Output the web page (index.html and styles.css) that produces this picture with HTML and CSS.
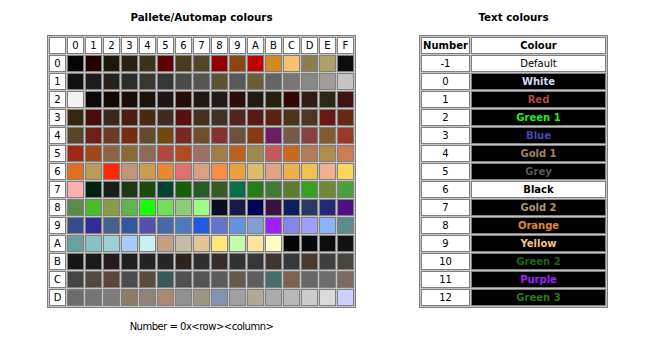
FILE: index.html
```html
<!DOCTYPE html>
<html>
<head>
<meta charset="utf-8">
<link rel="stylesheet" href="styles.css">
</head>
<body>
<div class="page">
  <div class="block">
    <div class="title">Pallete/Automap colours</div>
    <table class="grid">
      <tr><th></th><th>0</th><th>1</th><th>2</th><th>3</th><th>4</th><th>5</th><th>6</th><th>7</th><th>8</th><th>9</th><th>A</th><th>B</th><th>C</th><th>D</th><th>E</th><th>F</th></tr>
      <tr><th>0</th><td style="background:#050505"></td><td style="background:#230000"></td><td style="background:#1b1a0a"></td><td style="background:#2b2212"></td><td style="background:#3a3319"></td><td style="background:#600000"></td><td style="background:#483c1e"></td><td style="background:#524628"></td><td style="background:#920000"></td><td style="background:#8b4512"></td><td style="background:#c20000"></td><td style="background:#d48a20"></td><td style="background:#f2c26e"></td><td style="background:#8c7c52"></td><td style="background:#b0a068"></td><td style="background:#0c0c08"></td></tr>
      <tr><th>1</th><td style="background:#141210"></td><td style="background:#1d1d1d"></td><td style="background:#26231e"></td><td style="background:#2d2d2d"></td><td style="background:#3b3630"></td><td style="background:#363636"></td><td style="background:#4a4a4a"></td><td style="background:#5a5450"></td><td style="background:#5c5232"></td><td style="background:#585858"></td><td style="background:#6c5c38"></td><td style="background:#646464"></td><td style="background:#7a7472"></td><td style="background:#888888"></td><td style="background:#a09c98"></td><td style="background:#c4c4c4"></td></tr>
      <tr><th>2</th><td style="background:#f2f2f2"></td><td style="background:#0a0808"></td><td style="background:#120804"></td><td style="background:#1a0c08"></td><td style="background:#1c140c"></td><td style="background:#1e1614"></td><td style="background:#260c06"></td><td style="background:#201810"></td><td style="background:#211a18"></td><td style="background:#2c0e08"></td><td style="background:#201c14"></td><td style="background:#262010"></td><td style="background:#320806"></td><td style="background:#301c14"></td><td style="background:#2c2818"></td><td style="background:#401410"></td></tr>
      <tr><th>3</th><td style="background:#37260f"></td><td style="background:#460e0c"></td><td style="background:#3a281c"></td><td style="background:#4c1c0e"></td><td style="background:#482a12"></td><td style="background:#402a22"></td><td style="background:#581010"></td><td style="background:#483020"></td><td style="background:#403228"></td><td style="background:#522620"></td><td style="background:#5a1818"></td><td style="background:#5a2410"></td><td style="background:#4e3418"></td><td style="background:#503424"></td><td style="background:#6c1814"></td><td style="background:#642a12"></td></tr>
      <tr><th>4</th><td style="background:#5c4428"></td><td style="background:#6e2018"></td><td style="background:#6a3c24"></td><td style="background:#7a2c10"></td><td style="background:#664a2c"></td><td style="background:#704a0a"></td><td style="background:#7c2820"></td><td style="background:#6e4e2c"></td><td style="background:#8a302a"></td><td style="background:#6e5040"></td><td style="background:#883a10"></td><td style="background:#6e1c68"></td><td style="background:#785a48"></td><td style="background:#8a4040"></td><td style="background:#825c30"></td><td style="background:#9c3828"></td></tr>
      <tr><th>5</th><td style="background:#a02818"></td><td style="background:#a0481c"></td><td style="background:#8c6444"></td><td style="background:#886c38"></td><td style="background:#8c6a5a"></td><td style="background:#b04840"></td><td style="background:#b04c20"></td><td style="background:#9c7064"></td><td style="background:#a07c48"></td><td style="background:#be601c"></td><td style="background:#9c8850"></td><td style="background:#c45a58"></td><td style="background:#c86a1c"></td><td style="background:#b07c5c"></td><td style="background:#b08c4c"></td><td style="background:#c87c58"></td></tr>
      <tr><th>6</th><td style="background:#e07020"></td><td style="background:#b89c58"></td><td style="background:#ff2800"></td><td style="background:#c49478"></td><td style="background:#cc9a50"></td><td style="background:#e88830"></td><td style="background:#e07070"></td><td style="background:#d8a080"></td><td style="background:#f88c40"></td><td style="background:#eca03c"></td><td style="background:#dcbc68"></td><td style="background:#e0a484"></td><td style="background:#eeb04c"></td><td style="background:#f0c050"></td><td style="background:#f0b090"></td><td style="background:#fcd65c"></td></tr>
      <tr><th>7</th><td style="background:#fcb0b0"></td><td style="background:#022210"></td><td style="background:#162018"></td><td style="background:#1e3818"></td><td style="background:#1c4a0e"></td><td style="background:#024030"></td><td style="background:#186008"></td><td style="background:#285a24"></td><td style="background:#385a24"></td><td style="background:#087048"></td><td style="background:#287c14"></td><td style="background:#427a3a"></td><td style="background:#5c7c30"></td><td style="background:#38a020"></td><td style="background:#708838"></td><td style="background:#4aa03a"></td></tr>
      <tr><th>8</th><td style="background:#588c4c"></td><td style="background:#48bc28"></td><td style="background:#889c48"></td><td style="background:#60b44c"></td><td style="background:#18ff08"></td><td style="background:#70dc58"></td><td style="background:#8ccc78"></td><td style="background:#a0fc88"></td><td style="background:#0c0c24"></td><td style="background:#181a48"></td><td style="background:#020258"></td><td style="background:#381444"></td><td style="background:#0c2060"></td><td style="background:#2a3a60"></td><td style="background:#282878"></td><td style="background:#501080"></td></tr>
      <tr><th>9</th><td style="background:#384c8c"></td><td style="background:#322c98"></td><td style="background:#48608c"></td><td style="background:#3458a0"></td><td style="background:#5450b0"></td><td style="background:#4868a8"></td><td style="background:#5078c0"></td><td style="background:#205ae0"></td><td style="background:#6474cc"></td><td style="background:#6494dc"></td><td style="background:#80a0d4"></td><td style="background:#a020fc"></td><td style="background:#8484ec"></td><td style="background:#a0a0fc"></td><td style="background:#8cb4fc"></td><td style="background:#5c8c8c"></td></tr>
      <tr><th>A</th><td style="background:#68a0a0"></td><td style="background:#88c0c4"></td><td style="background:#9ccfd4"></td><td style="background:#accaf8"></td><td style="background:#ccf0f0"></td><td style="background:#c4a084"></td><td style="background:#c4bca4"></td><td style="background:#e4c494"></td><td style="background:#fce878"></td><td style="background:#c4fcac"></td><td style="background:#fce4a0"></td><td style="background:#fcfcc8"></td><td style="background:#040404"></td><td style="background:#080808"></td><td style="background:#0c0c0c"></td><td style="background:#121212"></td></tr>
      <tr><th>B</th><td style="background:#161616"></td><td style="background:#1a1a1a"></td><td style="background:#241c1a"></td><td style="background:#202020"></td><td style="background:#242424"></td><td style="background:#262626"></td><td style="background:#2e241c"></td><td style="background:#2e2e2e"></td><td style="background:#362c28"></td><td style="background:#323232"></td><td style="background:#34363a"></td><td style="background:#3e3430"></td><td style="background:#383838"></td><td style="background:#4a3a2e"></td><td style="background:#404040"></td><td style="background:#48443e"></td></tr>
      <tr><th>C</th><td style="background:#444444"></td><td style="background:#504a40"></td><td style="background:#5c463c"></td><td style="background:#4c4c4c"></td><td style="background:#5c4a3c"></td><td style="background:#365a5a"></td><td style="background:#505050"></td><td style="background:#545454"></td><td style="background:#5c5c5c"></td><td style="background:#665a4e"></td><td style="background:#5e5e5e"></td><td style="background:#467070"></td><td style="background:#7c6450"></td><td style="background:#686868"></td><td style="background:#6c6c6c"></td><td style="background:#7a6c64"></td></tr>
      <tr><th>D</th><td style="background:#6c6c6c"></td><td style="background:#747474"></td><td style="background:#7c7c7c"></td><td style="background:#907c64"></td><td style="background:#908474"></td><td style="background:#ac8870"></td><td style="background:#909090"></td><td style="background:#9c9484"></td><td style="background:#8094b4"></td><td style="background:#a0a0a0"></td><td style="background:#b0aa94"></td><td style="background:#acacac"></td><td style="background:#b8b8b8"></td><td style="background:#cccccc"></td><td style="background:#dadada"></td><td style="background:#cfcffc"></td></tr>
    </table>
    <div class="note">Number = 0x&lt;row&gt;&lt;column&gt;</div>
  </div>
  <div class="block">
    <div class="title">Text colours</div>
    <table class="tc">
      <tr><th class="num">Number</th><th class="col">Colour</th></tr>
      <tr><td class="num">-1</td><td class="col plain">Default</td></tr>
      <tr><td class="num">0</td><td class="col" style="color:#d4dcec">White</td></tr>
      <tr><td class="num">1</td><td class="col" style="color:#b04838">Red</td></tr>
      <tr><td class="num">2</td><td class="col" style="color:#20f010">Green 1</td></tr>
      <tr><td class="num">3</td><td class="col" style="color:#4848b0">Blue</td></tr>
      <tr><td class="num">4</td><td class="col" style="color:#a08464">Gold 1</td></tr>
      <tr><td class="num">5</td><td class="col" style="color:#585858">Grey</td></tr>
      <tr><td class="num">6</td><td class="col light">Black</td></tr>
      <tr><td class="num">7</td><td class="col" style="color:#a89870">Gold 2</td></tr>
      <tr><td class="num">8</td><td class="col" style="color:#e08830">Orange</td></tr>
      <tr><td class="num">9</td><td class="col" style="color:#f0c878">Yellow</td></tr>
      <tr><td class="num">10</td><td class="col" style="color:#186810">Green 2</td></tr>
      <tr><td class="num">11</td><td class="col" style="color:#a020fc">Purple</td></tr>
      <tr><td class="num">12</td><td class="col" style="color:#287c14">Green 3</td></tr>
    </table>
  </div>
</div>
</body>
</html>
```
FILE: styles.css
```css
body {
  margin: 0;
  background: #ffffff;
  color: #000000;
  font-family: "DejaVu Sans", Verdana, sans-serif;
  font-size: 10px;
}

.page {
  display: flex;
  align-items: flex-start;
  padding: 10px 0 0 47px;
  gap: 63px;
}

.block {
  display: flex;
  flex-direction: column;
  align-items: center;
}

.title {
  font-weight: bold;
  font-size: 10.3px;
  line-height: 14px;
  margin-bottom: 11px;
}

.grid,
.tc {
  border-collapse: separate;
  border-spacing: 1px;
  background: #c4c4c4;
  border: 1px solid #808080;
}

.grid th,
.grid td {
  width: 15px;
  height: 15px;
  padding: 0;
  border: 1px solid #808080;
  background: #ffffff;
  text-align: center;
  font-weight: normal;
  line-height: 15px;
}

.tc th,
.tc td {
  height: 15px;
  padding: 0;
  border: 1px solid #808080;
  text-align: center;
  line-height: 15px;
}

.tc th {
  background: #ffffff;
  font-weight: bold;
}

.tc .num {
  width: 47px;
  background: #ffffff;
}

.tc td.num {
  font-weight: normal;
}

.tc .col {
  width: 133px;
}

.tc td.col {
  background: #000000;
  font-weight: bold;
}

.tc td.plain {
  background: #ffffff;
  color: #000000;
  font-weight: normal;
}

.tc td.light {
  background: #ffffff;
  color: #000000;
}

.note {
  margin-top: 12px;
  line-height: 13px;
  letter-spacing: -0.5px;
}
```
